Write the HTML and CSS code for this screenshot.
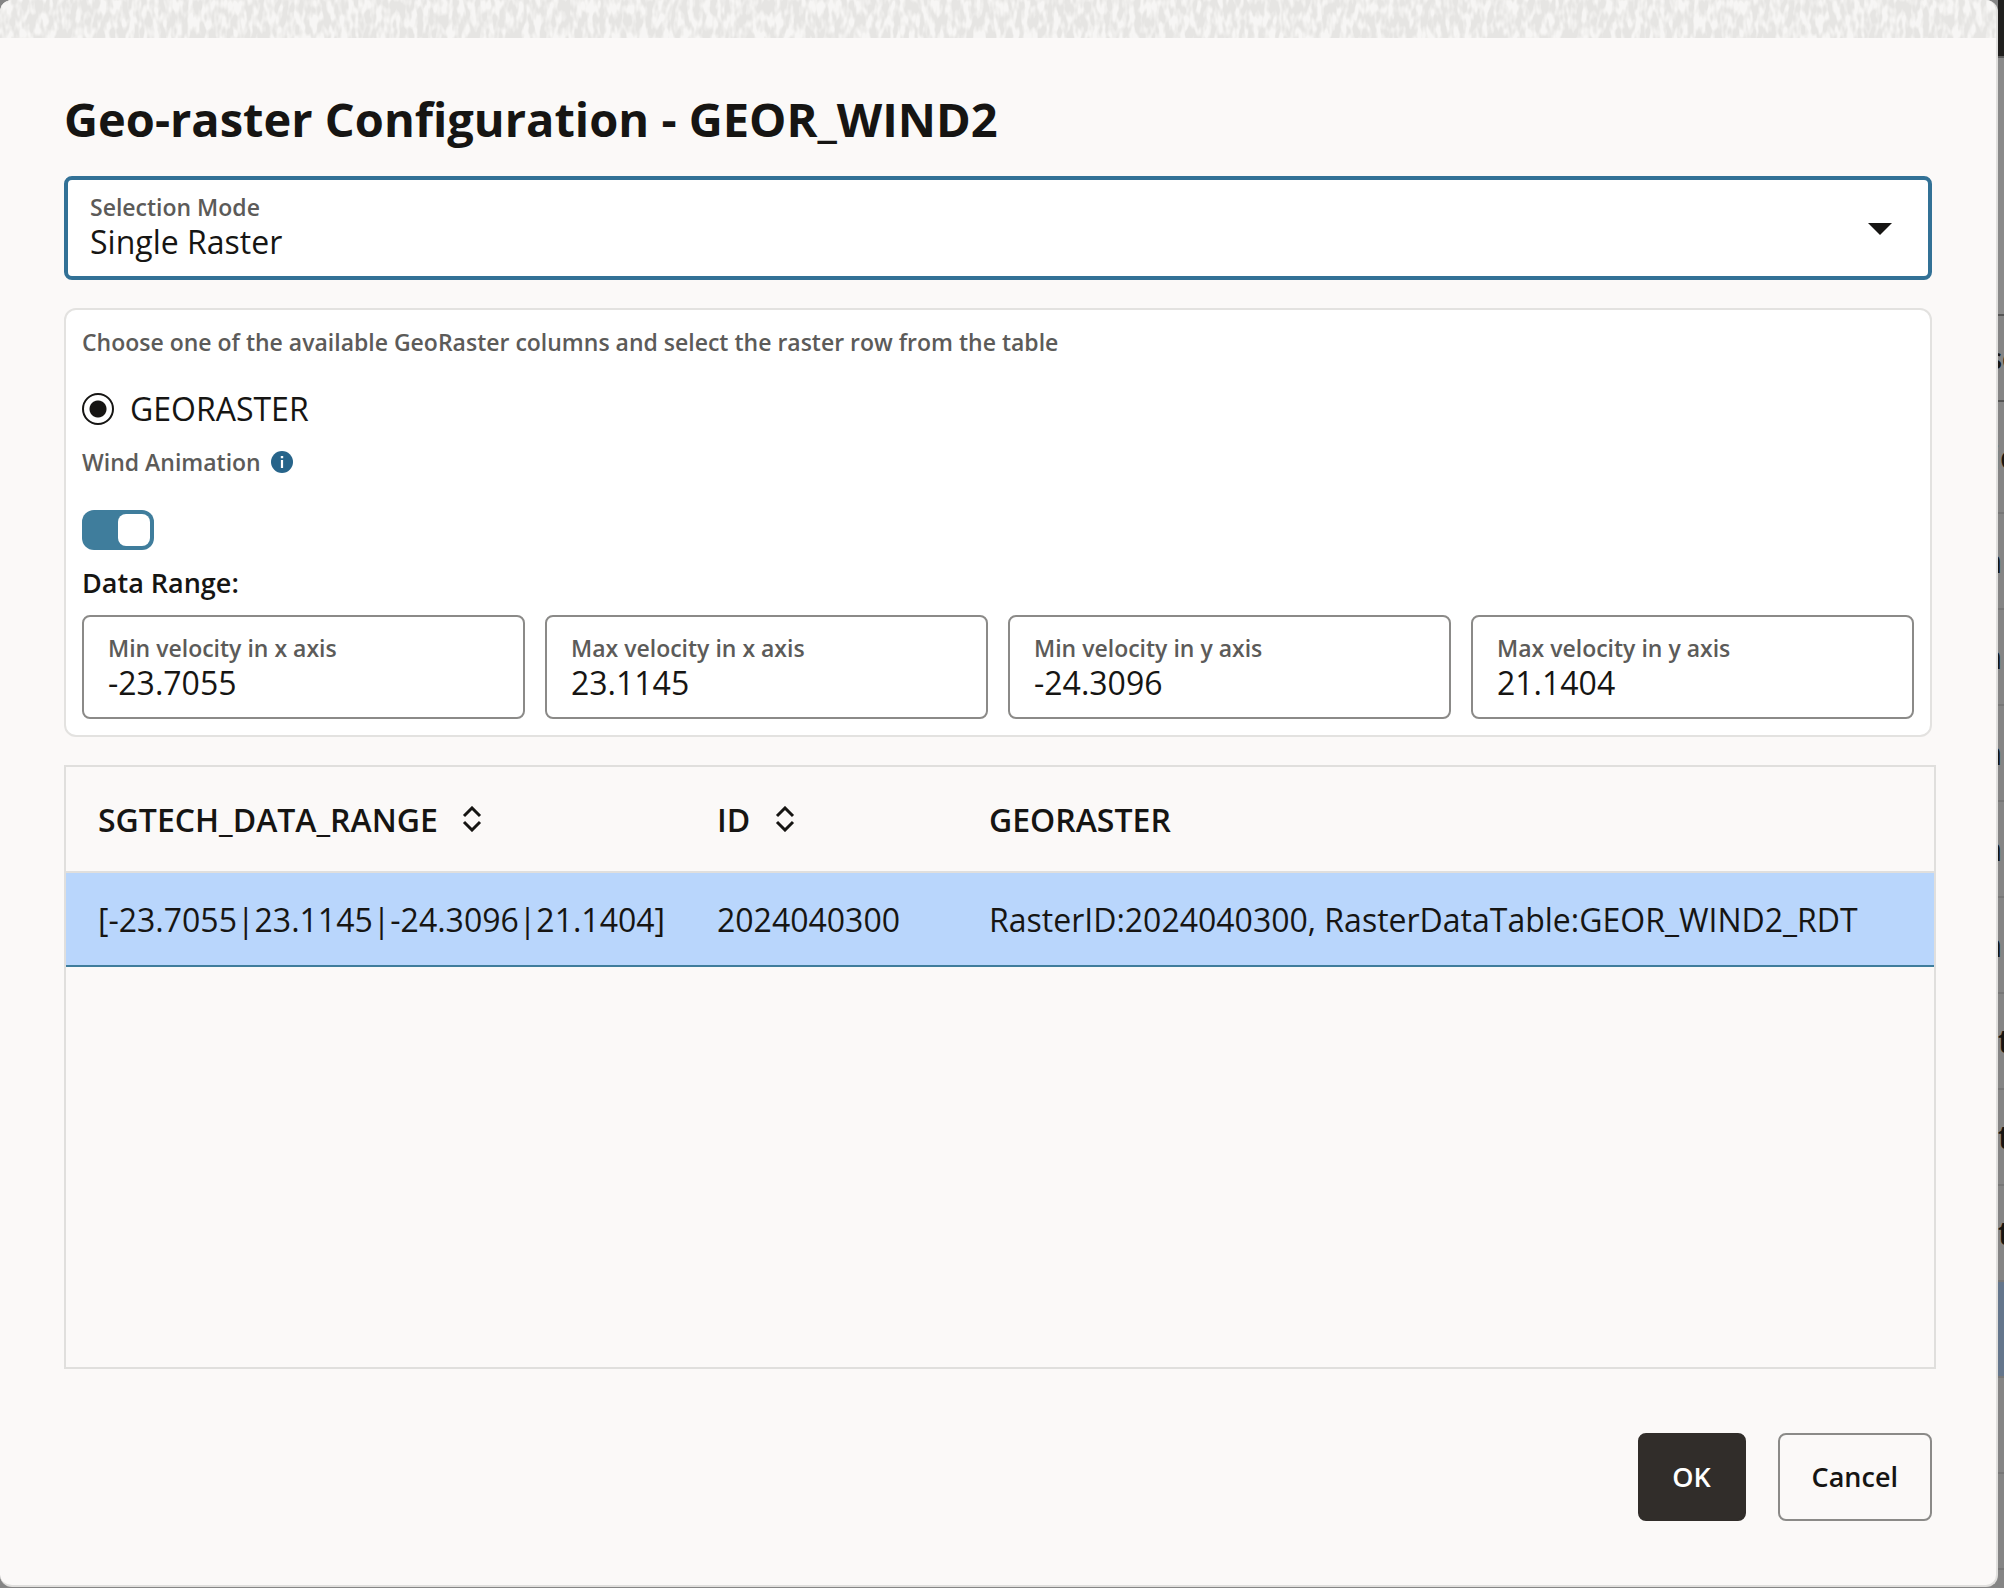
FILE: index.html
```
<!DOCTYPE html>
<html lang="en">
<head>
    <meta charset="UTF-8">
    <meta name="viewport" content="width=device-width, initial-scale=1.0">
    <title>Geo-raster Configuration</title>
    <link rel="stylesheet" href="styles.css">
</head>
<body>
    <main class="dialog">
        <svg class="texture" aria-hidden="true">
            <filter id="weave" x="0" y="0" width="100%" height="100%" color-interpolation-filters="sRGB">
                <feTurbulence type="fractalNoise" baseFrequency="0.17 0.07" numOctaves="2" seed="8" />
                <feColorMatrix values="0 0 0 0 0.97  0 0 0 0 0.966  0 0 0 0 0.96  4 0 0 0 -1.6" />
            </filter>
            <rect width="100%" height="100%" fill="#e6e5e3" />
            <rect width="100%" height="100%" filter="url(#weave)" />
        </svg>

        <form class="content">
            <h1>Geo-raster Configuration - GEOR_WIND2</h1>

            <div class="field select-field">
                <div class="field-text">
                    <label for="mode">Selection Mode</label>
                    <select id="mode">
                        <option>Single Raster</option>
                    </select>
                </div>
                <svg class="arrow" viewBox="0 0 24 12" aria-hidden="true"><path d="M0 0h24L12 12z" /></svg>
            </div>

            <section class="panel">
                <p class="hint">Choose one of the available GeoRaster columns and select the raster row from the table</p>
                <div class="radio-row">
                    <input type="radio" name="column" id="georaster" checked>
                    <label for="georaster">GEORASTER</label>
                </div>
                <div class="switch-label">
                    <label for="wind">Wind Animation</label>
                    <svg class="info" viewBox="0 0 22 22" aria-hidden="true">
                        <circle cx="11" cy="11" r="11" fill="#27648a" />
                        <path d="M9.8 5h2.4v2.2H9.8zM9.9 9h2.2v8H9.9z" fill="#fff" />
                    </svg>
                </div>
                <input type="checkbox" id="wind" class="switch" checked>
                <h2>Data Range:</h2>
                <div class="ranges">
                    <div class="field">
                        <label for="minx">Min velocity in x axis</label>
                        <input type="text" id="minx" value="-23.7055">
                    </div>
                    <div class="field">
                        <label for="maxx">Max velocity in x axis</label>
                        <input type="text" id="maxx" value="23.1145">
                    </div>
                    <div class="field">
                        <label for="miny">Min velocity in y axis</label>
                        <input type="text" id="miny" value="-24.3096">
                    </div>
                    <div class="field">
                        <label for="maxy">Max velocity in y axis</label>
                        <input type="text" id="maxy" value="21.1404">
                    </div>
                </div>
            </section>

            <div class="table-box">
                <table>
                    <thead>
                        <tr>
                            <th class="col-range">SGTECH_DATA_RANGE
                                <svg class="sort" viewBox="0 0 20 26" aria-hidden="true"><path d="M2 10l8-8 8 8M2 16l8 8 8-8" /></svg>
                            </th>
                            <th class="col-id">ID
                                <svg class="sort" viewBox="0 0 20 26" aria-hidden="true"><path d="M2 10l8-8 8 8M2 16l8 8 8-8" /></svg>
                            </th>
                            <th>GEORASTER</th>
                        </tr>
                    </thead>
                    <tbody>
                        <tr class="selected">
                            <td>[-23.7055|23.1145|-24.3096|21.1404]</td>
                            <td>2024040300</td>
                            <td>RasterID:2024040300, RasterDataTable:GEOR_WIND2_RDT</td>
                        </tr>
                    </tbody>
                </table>
            </div>

            <div class="actions">
                <button type="button" class="ok">OK</button>
                <button type="button" class="cancel">Cancel</button>
            </div>
        </form>
    </main>

    <!-- page behind the dialog -->
    <aside class="behind" aria-hidden="true">
        <div class="topbar"></div>
        <div class="toolbar"></div>
        <ul>
            <li class="head">sc</li>
            <li class="name">ic</li>
            <li class="end">a</li>
            <li class="end">a</li>
            <li class="end">a</li>
            <li class="end">a</li>
            <li class="end">a</li>
            <li>t</li>
            <li>t</li>
            <li>t</li>
            <li class="active"></li>
            <li></li>
            <li></li>
            <li></li>
        </ul>
    </aside>
</body>
</html>
```

FILE: styles.css
```
* {
    box-sizing: border-box;
}

body {
    margin: 0;
    display: flex;
    height: 100vh;
    overflow: hidden;
    background-color: #858585;
    color: #161513;
    font-family: "Open Sans", sans-serif;
    font-size: 32px;
    line-height: 38px;
}

h1, h2, p, ul {
    margin: 0;
    padding: 0;
}

.dialog {
    flex: 1;
    min-width: 0;
    display: flex;
    flex-direction: column;
    margin-bottom: 1px;
    background-color: #fbf9f8;
    border: 2px solid #e0dfdd;
    border-width: 0 2px 2px 0;
    border-radius: 12px;
    overflow: hidden;
}

.texture {
    display: block;
    flex: none;
    width: 100%;
    height: 38px;
}

.content {
    flex: 1;
    display: flex;
    flex-direction: column;
    padding: 48px 64px 64px;
}

h1 {
    font-size: 47px;
    line-height: 66px;
    margin-bottom: 24px;
}

.field {
    display: flex;
    flex-direction: column;
    padding: 18px 24px 12px;
    background-color: #fff;
    border: 2px solid #8b8a88;
    border-radius: 8px;
}

.field label,
.hint,
.switch-label {
    color: #5c5b59;
    font-size: 23px;
    font-weight: 600;
    line-height: 32px;
}

.field label {
    line-height: 26px;
}

.field input,
.field select {
    appearance: none;
    width: 100%;
    height: 44px;
    padding: 0;
    border: none;
    outline: none;
    background: none;
    color: inherit;
    font: inherit;
    line-height: 44px;
}

.select-field {
    flex-direction: row;
    align-items: center;
    padding: 14px 36px 12px 22px;
    border: 4px solid #327196;
    margin-bottom: 28px;
}

.field-text {
    flex: 1;
    display: flex;
    flex-direction: column;
}

.arrow {
    width: 24px;
    height: 12px;
    fill: #161513;
}

.panel {
    padding: 16px;
    margin-bottom: 28px;
    background-color: #fff;
    border: 2px solid #e3e2e0;
    border-radius: 12px;
}

.radio-row {
    display: flex;
    align-items: center;
    gap: 16px;
    margin: 32px 0 18px;
}

.radio-row input {
    appearance: none;
    width: 32px;
    height: 32px;
    margin: 0;
    border: 2px solid #161513;
    border-radius: 50%;
    background: radial-gradient(circle, #161513 8px, transparent 9px);
}

.switch-label {
    display: flex;
    align-items: center;
    gap: 10px;
    margin-bottom: 32px;
}

.info {
    width: 22px;
    height: 22px;
}

.switch {
    appearance: none;
    display: flex;
    justify-content: flex-end;
    width: 72px;
    height: 40px;
    margin: 0;
    padding: 4px;
    border-radius: 12px;
    background-color: #3f7d9c;
}

.switch::before {
    content: "";
    width: 32px;
    height: 32px;
    border-radius: 8px;
    background-color: #fff;
}

h2 {
    margin: 16px 0;
    font-size: 27px;
    font-weight: 600;
    line-height: 33px;
}

.ranges {
    display: grid;
    grid-template-columns: repeat(4, 1fr);
    gap: 20px;
}

.table-box {
    flex: 1;
    margin-right: -4px;
    border: 2px solid #e0dfdd;
}

table {
    width: 100%;
    table-layout: fixed;
    border-collapse: separate;
    border-spacing: 0;
}

th,
td {
    padding: 2px 32px 0;
    text-align: left;
    white-space: nowrap;
}

th {
    height: 106px;
    font-weight: 600;
    border-bottom: 2px solid #e0dfdd;
}

td {
    height: 94px;
    border-bottom: 2px solid #3f7d9c;
}

.col-range {
    width: 619px;
}

.col-id {
    width: 272px;
}

.selected {
    background-color: #b9d6fc;
}

.sort {
    width: 20px;
    height: 26px;
    margin-left: 16px;
    fill: none;
    stroke: #161513;
    stroke-width: 3;
}

.actions {
    display: flex;
    justify-content: flex-end;
    gap: 32px;
    margin-top: 64px;
}

button {
    min-width: 108px;
    height: 88px;
    padding: 0 32px;
    border: 2px solid #8b8a88;
    border-radius: 8px;
    background: none;
    color: inherit;
    font: inherit;
    font-size: 27px;
    font-weight: 600;
}

.ok {
    background-color: #312d2a;
    border-color: #312d2a;
    color: #fff;
}

.behind {
    width: 6px;
    overflow: hidden;
}

.topbar {
    height: 56px;
    background-color: #201f1e;
}

.toolbar {
    height: 258px;
    border-top: 2px solid #5c5c5c;
    background-color: #8a8a8a;
}

.behind li {
    display: flex;
    align-items: center;
    height: 96px;
    border-top: 2px solid #777;
    font-weight: 600;
}

.behind .end {
    justify-content: flex-end;
    padding-right: 2px;
    font-weight: 700;
}

.behind .head,
.behind .name {
    justify-content: flex-end;
    height: 86px;
    margin-right: -12px;
    border-color: #555;
    font-size: 28px;
}

.behind .name {
    height: 112px;
    font-size: 32px;
}

.behind .active {
    background-color: #64768c;
}
```
